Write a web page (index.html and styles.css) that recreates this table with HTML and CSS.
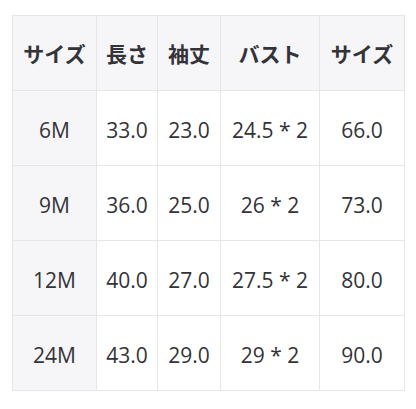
FILE: index.html
```html
<!DOCTYPE html>
<html lang="ja">
<head>
<meta charset="utf-8">
<link rel="stylesheet" href="styles.css">
</head>
<body>
<table class="size-table">
  <colgroup>
    <col class="c1"><col class="c2"><col class="c3"><col class="c4"><col class="c5">
  </colgroup>
  <thead>
    <tr><th>サイズ</th><th>長さ</th><th>袖丈</th><th>バスト</th><th>サイズ</th></tr>
  </thead>
  <tbody>
    <tr><th>6M</th><td>33.0</td><td>23.0</td><td>24.5 * 2</td><td>66.0</td></tr>
    <tr><th>9M</th><td>36.0</td><td>25.0</td><td>26 * 2</td><td>73.0</td></tr>
    <tr><th>12M</th><td>40.0</td><td>27.0</td><td>27.5 * 2</td><td>80.0</td></tr>
    <tr><th>24M</th><td>43.0</td><td>29.0</td><td>29 * 2</td><td>90.0</td></tr>
  </tbody>
</table>
</body>
</html>
```
FILE: styles.css
```css
html, body {
  margin: 0;
  padding: 0;
  background: #ffffff;
}
body {
  padding: 15px 12px;
  font-family: "Open Sans", "Noto Sans CJK JP", sans-serif;
  color: #333338;
}
.size-table {
  border-collapse: collapse;
  table-layout: fixed;
  width: 392px;
}
.c1 { width: 84px; }
.c2 { width: 61px; }
.c3 { width: 63px; }
.c4 { width: 99px; }
.c5 { width: 85px; }
.size-table th,
.size-table td {
  border: 1px solid #e6e6e8;
  height: 74px;
  padding: 0;
  text-align: center;
  vertical-align: middle;
  white-space: nowrap;
}
.size-table thead th {
  background: #f6f6f8;
  font-family: "Noto Sans CJK JP", sans-serif;
  font-weight: 700;
  font-size: 21px;
  color: #333338;
}
.size-table tbody th {
  background: #f6f6f8;
  font-weight: 400;
}
.size-table tbody th,
.size-table tbody td {
  font-size: 21px;
  height: 71px;
  padding-top: 3px;
}
```
